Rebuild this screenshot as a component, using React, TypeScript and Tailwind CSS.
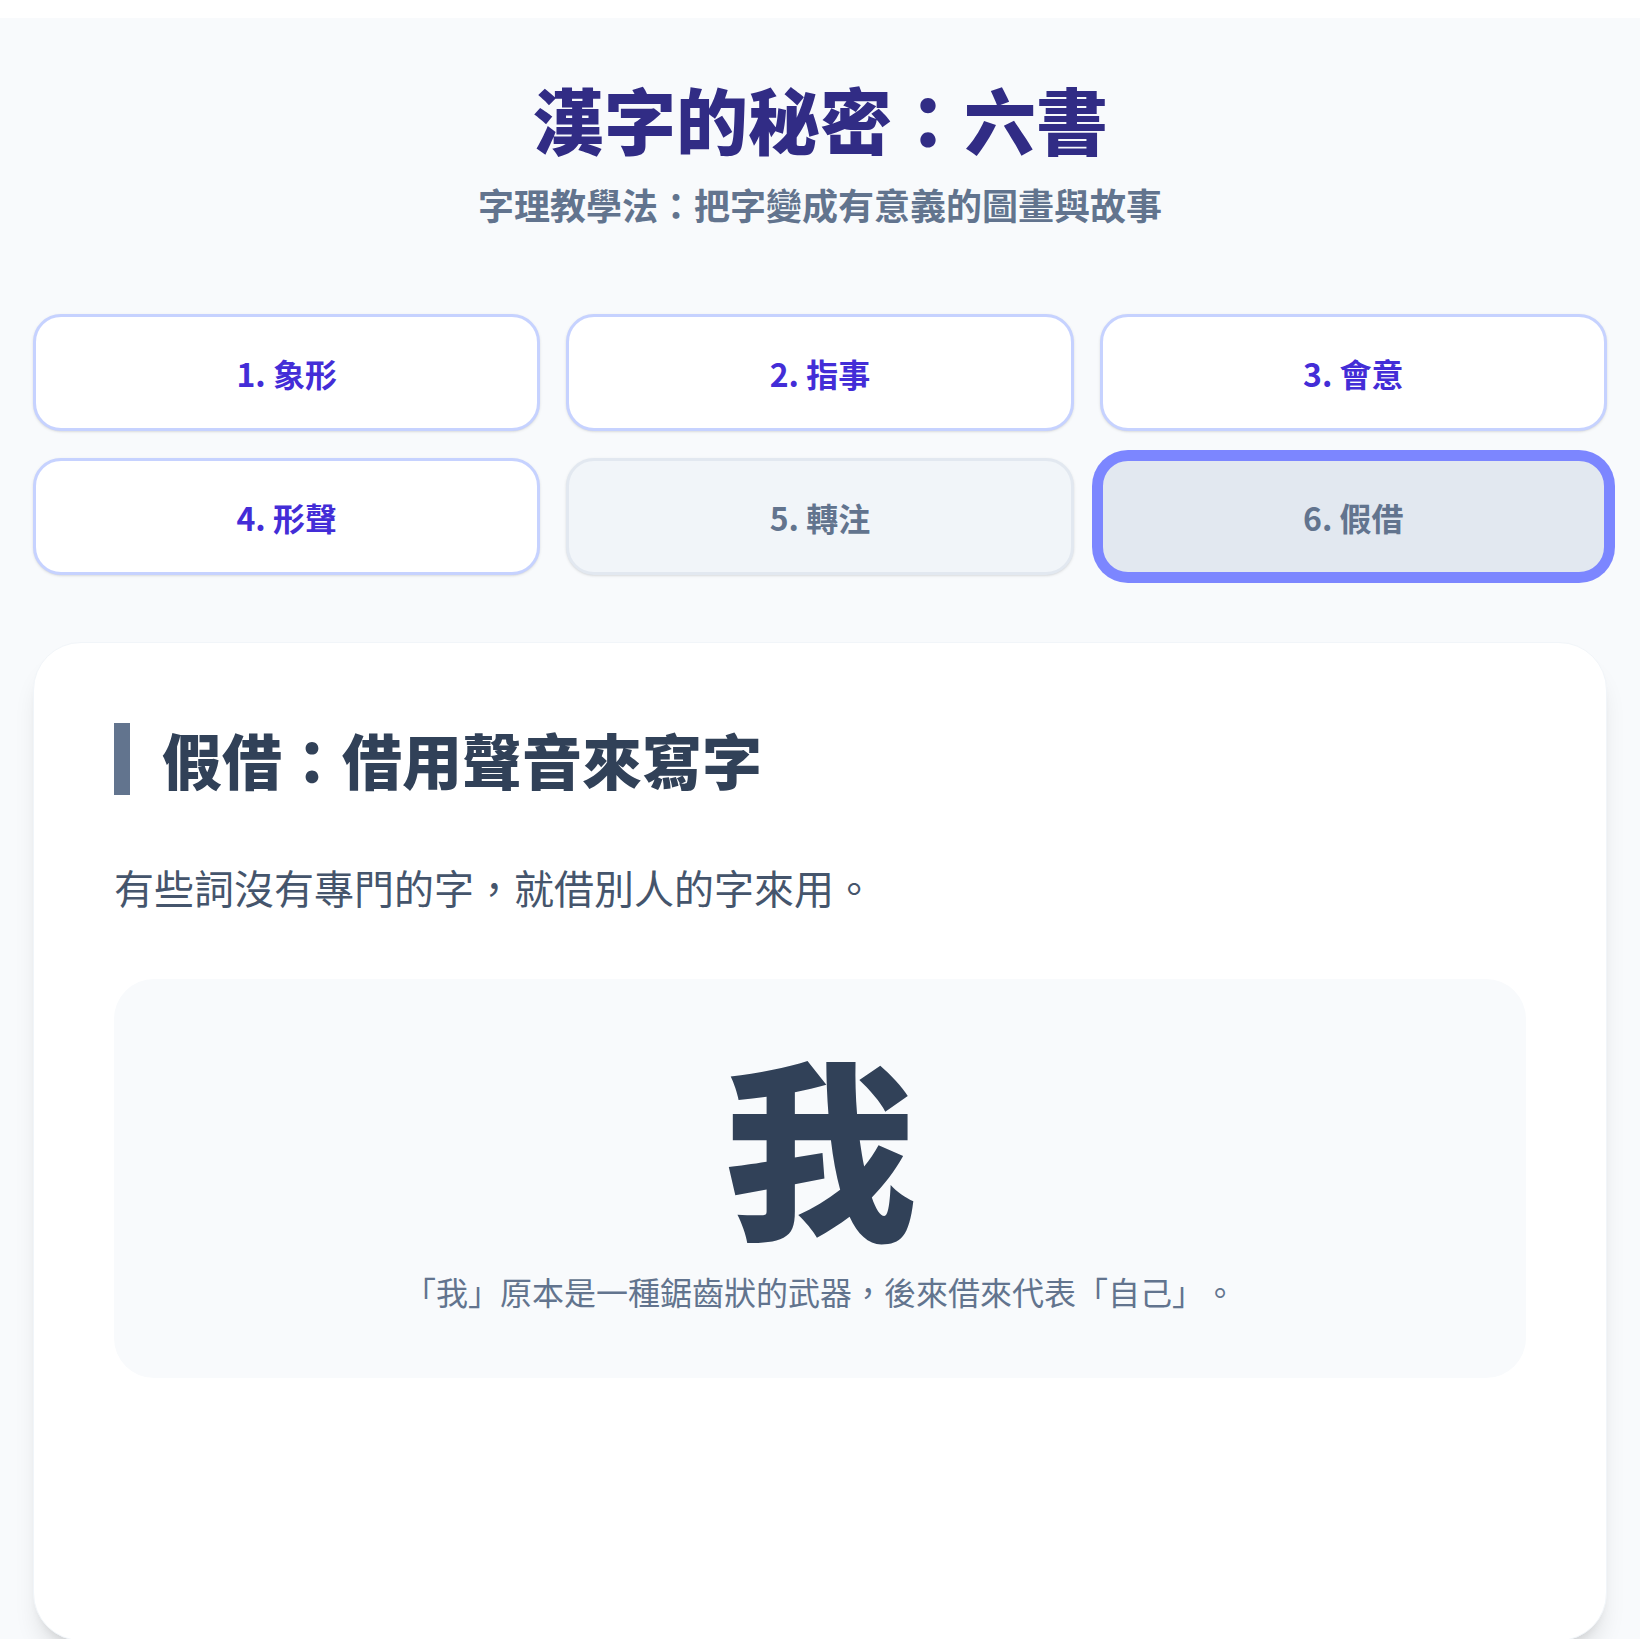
import React, { useState } from 'react';

const FONT = { fontFamily: '"Noto Sans CJK TC", "Noto Sans", sans-serif' };

const methods = [
    { id: 1, label: '1. 象形' },
    { id: 2, label: '2. 指事' },
    { id: 3, label: '3. 會意' },
    { id: 4, label: '4. 形聲' },
    { id: 5, label: '5. 轉注' },
    { id: 6, label: '6. 假借' },
];

const App: React.FC = () => {
    const [active, setActive] = useState(6);

    const buttonClass = (id: number) => {
        if (id === active) {
            return 'border-[3px] border-indigo-400 ring-8 ring-indigo-400 bg-slate-200 text-slate-500';
        }
        if (id === 5) {
            return 'border-[3px] border-slate-200 bg-slate-100 text-slate-500 shadow-sm';
        }
        return 'border-[3px] border-indigo-200 bg-white text-indigo-700 shadow-sm';
    };

    return (
        <div className="bg-white pt-[18px] min-h-screen [text-spacing-trim:space-all]" style={FONT}>
            <div className="bg-slate-50 px-[33px] pt-16 pb-10">
                <h1 className="text-center text-[72px] leading-none font-black text-indigo-900">漢字的秘密：六書</h1>
                <p className="mt-8 text-center text-[36px] leading-none font-bold text-slate-500">字理教學法：把字變成有意義的圖畫與故事</p>

                <div className="mt-[92px] grid grid-cols-3 gap-x-[26px] gap-y-[27px]">
                    {methods.map((m) => (
                        <button
                            key={m.id}
                            onClick={() => setActive(m.id)}
                            className={`h-[117px] rounded-[28px] text-[32px] leading-none font-bold ${buttonClass(m.id)}`}
                        >
                            {m.label}
                        </button>
                    ))}
                </div>

                <div className="mt-[67px] min-h-[999px] rounded-[48px] border border-slate-100 bg-white p-20 shadow-xl">
                    <h2 className="border-l-[16px] border-slate-500 pl-8 text-6xl leading-[72px] font-black text-slate-700">假借：借用聲音來寫字</h2>
                    <p className="mt-[62px] text-[40px] leading-[60px] text-slate-600">有些詞沒有專門的字，就借別人的字來用。</p>

                    <div className="mt-[62px] rounded-[40px] bg-slate-50 pt-[66px] pb-[71px] text-center">
                        <div className="text-[192px] leading-none font-black text-slate-700">我</div>
                        <p className="mt-[38px] text-[32px] leading-none text-slate-500">「我」原本是一種鋸齒狀的武器，後來借來代表「自己」。</p>
                    </div>
                </div>
            </div>
        </div>
    );
};

export default App;
